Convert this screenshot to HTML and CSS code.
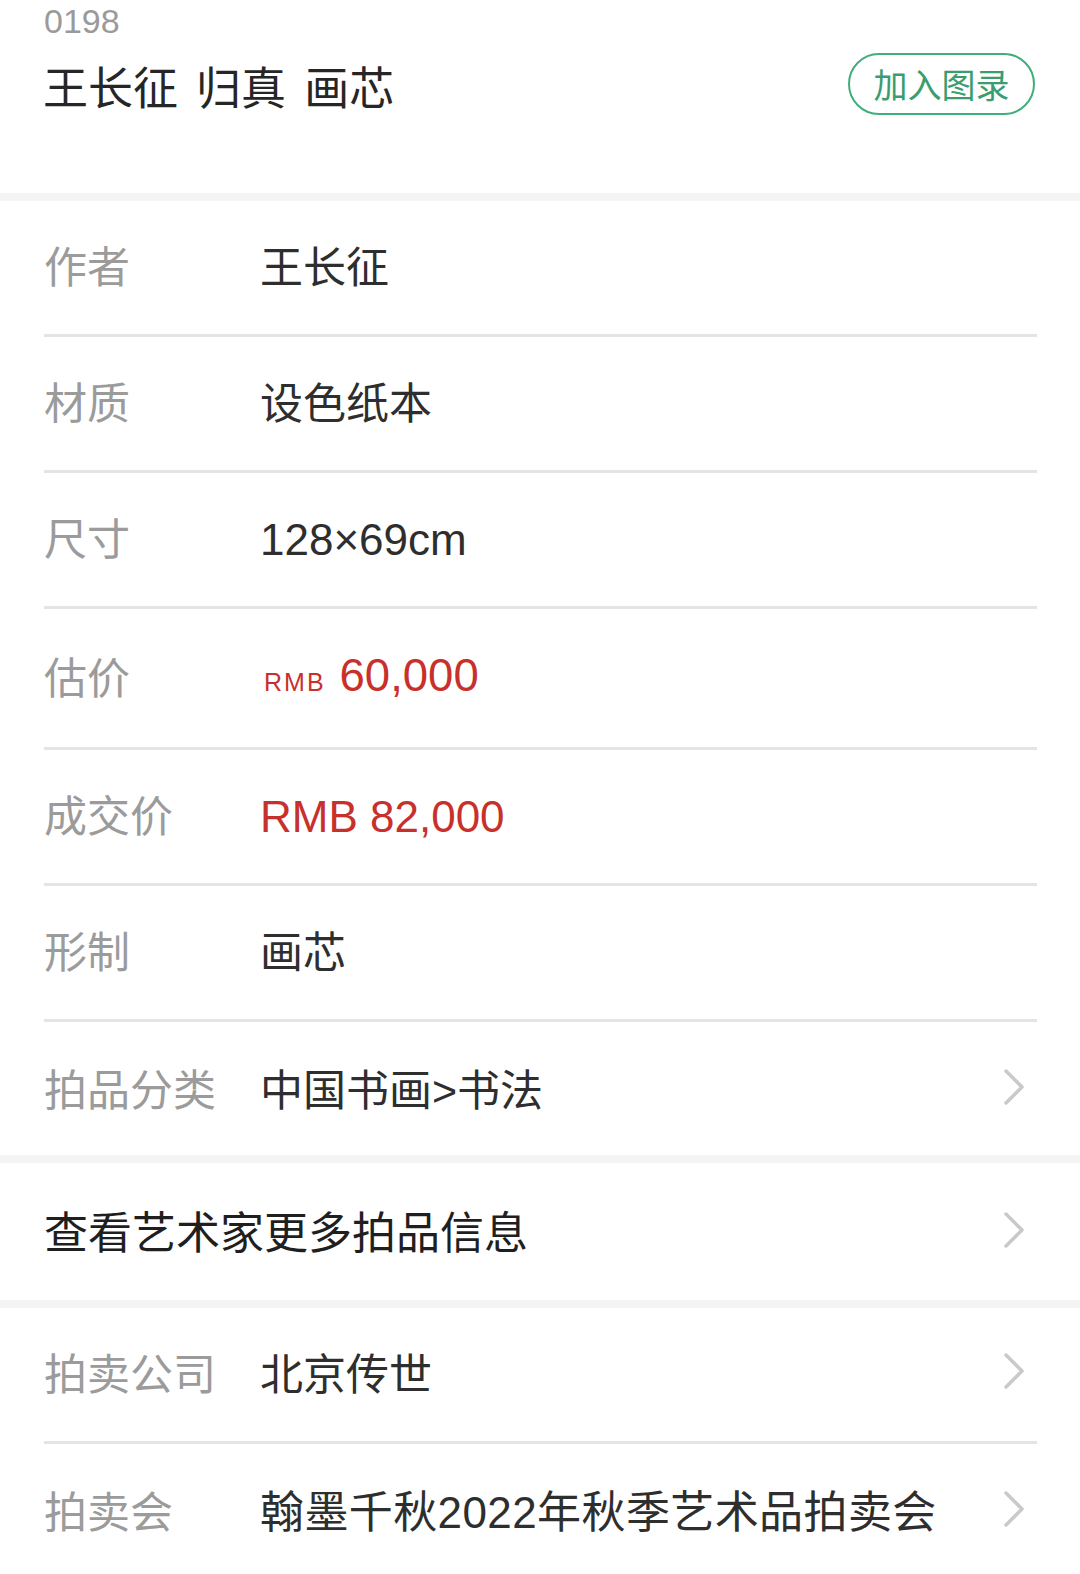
FILE: index.html
```html
<!DOCTYPE html>
<html lang="zh-CN">
<head>
<meta charset="utf-8">
<title>0198 王长征 归真 画芯</title>
<link rel="stylesheet" href="styles.css">
</head>
<body>
<div class="page">
  <header class="header">
    <div class="code">0198</div>
    <div class="title-row">
      <h1 class="title">王长征 归真 画芯</h1>
      <button class="add-btn">加入图录</button>
    </div>
  </header>

  <div class="band"></div>

  <section class="list">
    <div class="row"><span class="label">作者</span><span class="value">王长征</span></div>
    <div class="row"><span class="label">材质</span><span class="value">设色纸本</span></div>
    <div class="row"><span class="label">尺寸</span><span class="value num">128×69cm</span></div>
    <div class="row row-tall"><span class="label">估价</span><span class="value price est"><span class="cur">RMB</span>60,000</span></div>
    <div class="row"><span class="label">成交价</span><span class="value price">RMB 82,000</span></div>
    <div class="row"><span class="label">形制</span><span class="value">画芯</span></div>
    <div class="row last"><span class="label">拍品分类</span><span class="value">中国书画&gt;书法</span>
      <svg class="chev" viewBox="0 0 22 38" width="22" height="38"><path d="M3 3 L19 19 L3 35" fill="none" stroke="#c9c9c9" stroke-width="3.5" stroke-linecap="round" stroke-linejoin="round"/></svg>
    </div>
  </section>

  <div class="band"></div>

  <div class="link-row">
    <span class="link-text">查看艺术家更多拍品信息</span>
    <svg class="chev" viewBox="0 0 22 38" width="22" height="38"><path d="M3 3 L19 19 L3 35" fill="none" stroke="#c9c9c9" stroke-width="3.5" stroke-linecap="round" stroke-linejoin="round"/></svg>
  </div>

  <div class="band"></div>

  <section class="list">
    <div class="row"><span class="label">拍卖公司</span><span class="value">北京传世</span>
      <svg class="chev" viewBox="0 0 22 38" width="22" height="38"><path d="M3 3 L19 19 L3 35" fill="none" stroke="#c9c9c9" stroke-width="3.5" stroke-linecap="round" stroke-linejoin="round"/></svg>
    </div>
    <div class="row last"><span class="label">拍卖会</span><span class="value wide">翰墨千秋2022年秋季艺术品拍卖会</span>
      <svg class="chev" viewBox="0 0 22 38" width="22" height="38"><path d="M3 3 L19 19 L3 35" fill="none" stroke="#c9c9c9" stroke-width="3.5" stroke-linecap="round" stroke-linejoin="round"/></svg>
    </div>
  </section>
</div>
</body>
</html>
```

FILE: styles.css
```css
* { box-sizing: border-box; }

html, body {
  margin: 0;
  padding: 0;
  background: #ffffff;
  overflow: hidden;
}

body {
  font-family: "Liberation Sans", "Noto Sans CJK SC", sans-serif;
  color: #333333;
}

.page {
  width: 1080px;
  height: 1574px;
  overflow: hidden;
}

.header {
  padding: 4px 45px 0 44px;
  height: 193px;
}

.code {
  font-size: 34px;
  line-height: 34px;
  color: #9a9a9a;
}

.title-row {
  display: flex;
  justify-content: space-between;
  align-items: flex-start;
  margin-top: 15px;
}

.title {
  margin: 2px 0 0 -1px;
  font-family: "Noto Sans CJK SC", sans-serif;
  font-weight: 400;
  font-size: 45px;
  line-height: 62px;
  word-spacing: 8px;
  color: #262626;
}

.add-btn {
  width: 187px;
  height: 62px;
  border: 2.5px solid #3fae7c;
  border-radius: 31px;
  background: #ffffff;
  color: #3a9d6e;
  font-family: "Noto Sans CJK SC", sans-serif;
  font-size: 34px;
  line-height: 1;
  padding: 0;
  display: flex;
  align-items: center;
  justify-content: center;
}

.band {
  height: 8px;
  background: #f4f4f4;
}

.list {
  display: flex;
  flex-direction: column;
}

.row {
  display: flex;
  align-items: center;
  height: 136px;
  padding-bottom: 7px;
  margin: 0 43px 0 44px;
  border-bottom: 3px solid #e4e4e4;
}

.row.row-tall { height: 141px; }

.row.last {
  border-bottom: none;
  height: 133px;
  padding-bottom: 4px;
}

.label {
  width: 216px;
  flex: none;
  font-size: 43px;
  color: #9b9b9b;
  font-family: "Noto Sans CJK SC", sans-serif;
}

.value {
  flex: 1;
  font-size: 43px;
  color: #2e2e2e;
  font-family: "Liberation Sans", "Noto Sans CJK SC", sans-serif;
}

.value.num {
  font-size: 44px;
  padding-top: 8px;
}

.value.wide {
  font-size: 44px;
  letter-spacing: 0.4px;
}

.price {
  color: #c8302b;
  font-size: 44px;
  padding-top: 8px;
}

.price.est {
  padding-left: 4px;
  padding-top: 2px;
  font-size: 45.5px;
}

.cur {
  font-size: 25px;
  letter-spacing: 2px;
  margin-right: 14px;
}

.chev {
  flex: none;
  margin-right: 12px;
  display: block;
}

.link-row {
  display: flex;
  align-items: center;
  justify-content: space-between;
  height: 137px;
  padding: 0 43px 3px 44px;
}

.link-text {
  font-family: "Noto Sans CJK SC", sans-serif;
  font-size: 44px;
  color: #1f1f1f;
}
```
